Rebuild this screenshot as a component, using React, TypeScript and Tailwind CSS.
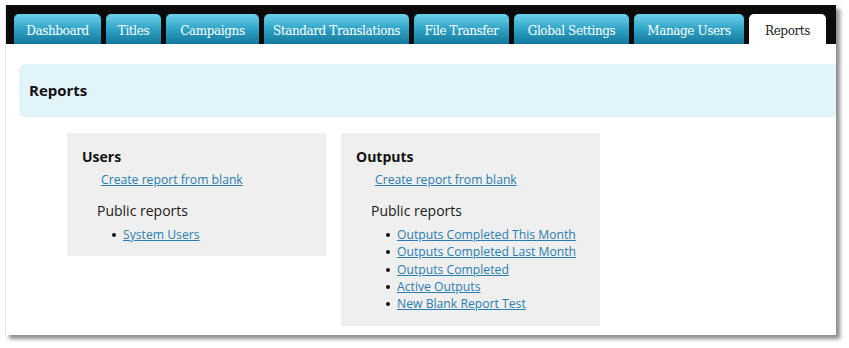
import React from "react";

const tabs: { label: string; w: string; active?: boolean }[] = [
  { label: "Dashboard", w: "w-[87px]" },
  { label: "Titles", w: "w-[55px]" },
  { label: "Campaigns", w: "w-[93px]" },
  { label: "Standard Translations", w: "w-[145px]" },
  { label: "File Transfer", w: "w-[95px]" },
  { label: "Global Settings", w: "w-[115px]" },
  { label: "Manage Users", w: "w-[110px]" },
  { label: "Reports", w: "w-[77px]", active: true },
];

function Box({
  title,
  items,
  pb,
}: {
  title: string;
  items: string[];
  pb: string;
}) {
  return (
    <div className={`w-[259px] bg-[#efefef] pt-[15px] pl-[15px] ${pb}`}>
      <div className="text-[14px] leading-[18px] font-bold text-[#111]">{title}</div>
      <div className="mt-[5px] pl-[19px] text-[12.2px] leading-[18px]">
        <a href="#" className="text-[#2a7db0] underline">
          Create report from blank
        </a>
      </div>
      <div className="mt-[13px] pl-[15px] text-[14px] leading-[18px] text-[#1a1a1a]">
        Public reports
      </div>
      <ul className="mt-[6px] pl-[41px] text-[12.2px] leading-[17.3px]">
        {items.map((it) => (
          <li key={it} className="relative">
            <span className="absolute left-[-11px] top-[7px] w-[4px] h-[4px] rounded-full bg-[#111]" />
            <a href="#" className="text-[#2a7db0] underline">
              {it}
            </a>
          </li>
        ))}
      </ul>
    </div>
  );
}

export default function App() {
  return (
    <div
      className="w-[849px] h-[348px] bg-white overflow-hidden pt-[5px] pl-[5px]"
      style={{ fontFamily: '"Open Sans", "DejaVu Sans", sans-serif' }}
    >
      <div className="w-[831px] h-[330px] bg-white border-l border-[#e6e6e6] shadow-[4px_4px_4px_rgba(0,0,0,0.45)] flex flex-col">
        <div className="h-[39px] bg-[#0b0b0b] flex items-end gap-[5px] pl-[8px]">
          {tabs.map((t) => (
            <div
              key={t.label}
              className={`${t.w} h-[30px] pt-[3px] rounded-t-[5px] flex items-center justify-center text-[12px] ${
                t.active
                  ? "bg-white text-[#222]"
                  : "bg-gradient-to-b from-[#6ad2ec] via-[#2fa3c6] to-[#13799d] text-white"
              }`}
              style={{ fontFamily: '"DejaVu Serif", "Liberation Serif", serif', letterSpacing: "-0.4px" }}
            >
              {t.label}
            </div>
          ))}
        </div>
        <div className="pl-[13px] pt-[20px]">
          <div className="h-[53px] bg-[#e1f4fa] rounded-l-[6px] flex items-center pl-[10px] text-[15px] font-bold text-[#111]">
            Reports
          </div>
          <div className="mt-[16px] ml-[48px] flex items-start gap-[15px]">
            <Box title="Users" items={["System Users"]} pb="pb-[13px]" />
            <Box
              title="Outputs"
              items={[
                "Outputs Completed This Month",
                "Outputs Completed Last Month",
                "Outputs Completed",
                "Active Outputs",
                "New Blank Report Test",
              ]}
              pb="pb-[14px]"
            />
          </div>
        </div>
      </div>
    </div>
  );
}
